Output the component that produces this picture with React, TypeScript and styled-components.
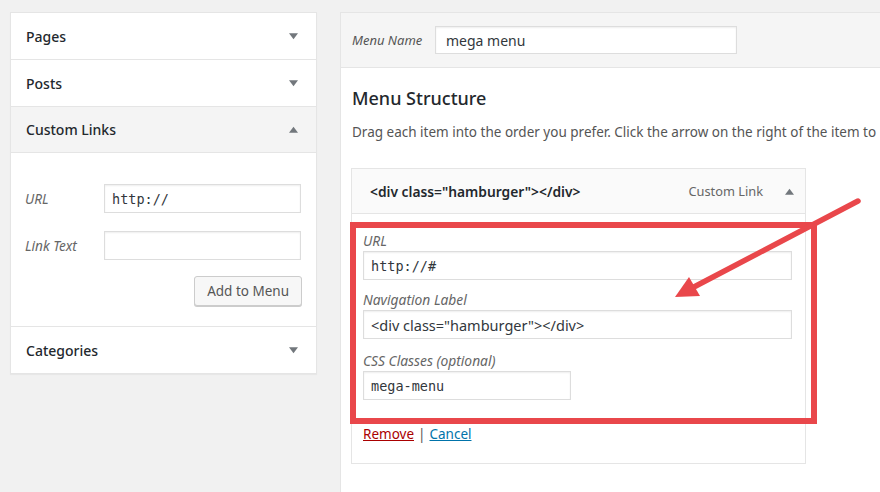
import React from "react";
import styled, { createGlobalStyle } from "styled-components";

const GlobalStyle = createGlobalStyle`
  html, body {
    margin: 0;
    padding: 0;
    background: #f1f1f1;
    overflow: hidden;
  }
  body {
    font-family: "Noto Sans", "Open Sans", sans-serif;
    color: #23282d;
  }
  * {
    box-sizing: border-box;
  }
`;

type Section = { title: string; open?: boolean };

const Caret = ({ up }: { up?: boolean }) => (
  <CaretSvg viewBox="0 0 10 7" $up={up}>
    <path d="M0 0 L10 0 L5 6.5 Z" fill="#72777c" />
  </CaretSvg>
);

const App: React.FC = () => {
  const sections: Section[] = [
    { title: "Pages" },
    { title: "Posts" },
    { title: "Custom Links", open: true },
    { title: "Categories" },
  ];

  return (
    <Page>
      <GlobalStyle />
      <Sidebar>
        {sections.map((s) => (
          <Accordion key={s.title}>
            <AccordionTitle $open={s.open}>
              <span>{s.title}</span>
              <Caret up={s.open} />
            </AccordionTitle>
            {s.open && (
              <AccordionBody>
                <LinkRow>
                  <SideLabel>URL</SideLabel>
                  <SideInput $mono>http://</SideInput>
                </LinkRow>
                <LinkRow>
                  <SideLabel>Link Text</SideLabel>
                  <SideInput />
                </LinkRow>
                <ButtonRow>
                  <Button>Add to Menu</Button>
                </ButtonRow>
              </AccordionBody>
            )}
          </Accordion>
        ))}
      </Sidebar>

      <Editor>
        <EditorHeader>
          <NameLabel>Menu Name</NameLabel>
          <NameInput>mega menu</NameInput>
        </EditorHeader>
        <EditorBody>
          <Heading>Menu Structure</Heading>
          <Description>
            Drag each item into the order you prefer. Click the arrow on the right of the item to
          </Description>
          <MenuItem>
            <ItemHeader>
              <ItemTitle>&lt;div class="hamburger"&gt;&lt;/div&gt;</ItemTitle>
              <ItemControls>
                <ItemType>Custom Link</ItemType>
                <Caret up />
              </ItemControls>
            </ItemHeader>
            <ItemSettings>
              <Field>
                <FieldLabel>URL</FieldLabel>
                <FieldInput $mono>http://#</FieldInput>
              </Field>
              <Field>
                <FieldLabel>Navigation Label</FieldLabel>
                <FieldInput>&lt;div class="hamburger"&gt;&lt;/div&gt;</FieldInput>
              </Field>
              <Field>
                <FieldLabel>CSS Classes (optional)</FieldLabel>
                <FieldInput $mono $width={208}>
                  mega-menu
                </FieldInput>
              </Field>
              <Actions>
                <ActionLink $color="#a00">Remove</ActionLink>
                <Sep>|</Sep>
                <ActionLink $color="#0073aa">Cancel</ActionLink>
              </Actions>
            </ItemSettings>
            <Highlight />
          </MenuItem>
        </EditorBody>
      </Editor>

      <Annotation viewBox="0 0 880 492">
        <line
          x1="858"
          y1="201"
          x2="692"
          y2="288"
          stroke="#e9474b"
          strokeWidth="5.5"
          strokeLinecap="round"
        />
        <path d="M675 297 L689 277 L700 296 Z" fill="#e9474b" />
      </Annotation>
    </Page>
  );
};

const Page = styled.div`
  position: relative;
  width: 880px;
  height: 492px;
  display: flex;
  align-items: flex-start;
  gap: 23px;
  padding: 12px 0 0 10px;
  overflow: hidden;
`;

const CaretSvg = styled.svg<{ $up?: boolean }>`
  width: 9px;
  height: 7px;
  transform: ${(p) => (p.$up ? "rotate(180deg)" : "none")};
`;

const Sidebar = styled.div`
  width: 307px;
  flex-shrink: 0;
  background: #fff;
  border: 1px solid #e5e5e5;
  box-shadow: 0 1px 1px rgba(0, 0, 0, 0.04);
`;

const Accordion = styled.div`
  border-bottom: 1px solid #e5e5e5;
  &:last-child {
    border-bottom: none;
  }
`;

const AccordionTitle = styled.div<{ $open?: boolean }>`
  height: 46px;
  display: flex;
  align-items: center;
  justify-content: space-between;
  padding: 0 18px 0 15px;
  font-size: 14px;
  font-weight: 500;
  color: #23282d;
  background: ${(p) => (p.$open ? "#f4f4f4" : "#fff")};
  border-bottom: ${(p) => (p.$open ? "1px solid #e5e5e5" : "none")};
`;

const AccordionBody = styled.div`
  padding: 31px 15px 20px 14px;
`;

const LinkRow = styled.div`
  display: flex;
  align-items: center;
  margin-bottom: 18px;
  & + & {
    margin-bottom: 16px;
  }
`;

const SideLabel = styled.span`
  width: 79px;
  font-size: 13.6px;
  font-style: italic;
  color: #666;
`;

const SideInput = styled.div<{ $mono?: boolean }>`
  flex: 1;
  height: 29px;
  display: flex;
  align-items: center;
  padding: 0 7px;
  background: #fff;
  border: 1px solid #ddd;
  box-shadow: inset 0 1px 2px rgba(0, 0, 0, 0.07);
  font-family: ${(p) => (p.$mono ? '"DejaVu Sans Mono", monospace' : "inherit")};
  font-size: ${(p) => (p.$mono ? "13.5px" : "14px")};
  color: #32373c;
`;

const ButtonRow = styled.div`
  display: flex;
  justify-content: flex-end;
  margin-right: -1px;
`;

const Button = styled.div`
  height: 30px;
  padding: 0 12px;
  display: flex;
  align-items: center;
  background: #f7f7f7;
  border: 1px solid #ccc;
  border-radius: 3px;
  box-shadow: 0 1px 0 #ccc;
  font-size: 13.5px;
  color: #555;
`;

const Editor = styled.div`
  flex: 1;
  min-width: 600px;
  height: 520px;
  background: #fff;
  border: 1px solid #e5e5e5;
  border-right: none;
`;

const EditorHeader = styled.div`
  height: 55px;
  display: flex;
  align-items: center;
  padding: 0 11px;
  background: #f5f5f5;
  border-bottom: 1px solid #e5e5e5;
`;

const NameLabel = styled.span`
  font-size: 13px;
  font-style: italic;
  color: #555;
  width: 83px;
`;

const NameInput = styled.div`
  width: 302px;
  height: 28px;
  display: flex;
  align-items: center;
  padding: 0 10px;
  background: #fff;
  border: 1px solid #ddd;
  box-shadow: inset 0 1px 2px rgba(0, 0, 0, 0.07);
  font-size: 14px;
  color: #32373c;
`;

const EditorBody = styled.div`
  padding: 0 10px 0 10px;
`;

const Heading = styled.h3`
  margin: 18px 0 0 1px;
  font-size: 18px;
  font-weight: 500;
  line-height: 24px;
  color: #23282d;
`;

const Description = styled.p`
  margin: 12px 0 0 1px;
  font-size: 13.5px;
  line-height: 20px;
  color: #555;
  white-space: nowrap;
`;

const MenuItem = styled.div`
  position: relative;
  width: 455px;
  margin-top: 26px;
  border: 1px solid #e5e5e5;
  background: #fff;
`;

const ItemHeader = styled.div`
  height: 45px;
  display: flex;
  align-items: center;
  justify-content: space-between;
  padding: 0 11px 0 18px;
  background: #fafafa;
  border-bottom: 1px solid #e5e5e5;
`;

const ItemTitle = styled.span`
  font-size: 13.8px;
  font-weight: 600;
  color: #23282d;
`;

const ItemControls = styled.div`
  display: flex;
  align-items: center;
  gap: 22px;
`;

const ItemType = styled.span`
  font-size: 12.8px;
  color: #666;
`;

const ItemSettings = styled.div`
  padding: 18px 13px 20px 11px;
`;

const Field = styled.div`
  margin-bottom: 11px;
  &:nth-child(2) {
    margin-bottom: 13px;
  }
`;

const FieldLabel = styled.div`
  font-size: 13.8px;
  line-height: 18px;
  font-style: italic;
  color: #666;
  margin-bottom: 1px;
`;

const FieldInput = styled.div<{ $mono?: boolean; $width?: number }>`
  width: ${(p) => (p.$width ? `${p.$width}px` : "100%")};
  height: 29px;
  display: flex;
  align-items: center;
  padding: 0 7px;
  background: #fff;
  border: 1px solid #ddd;
  box-shadow: inset 0 1px 2px rgba(0, 0, 0, 0.07);
  font-family: ${(p) => (p.$mono ? '"DejaVu Sans Mono", monospace' : "inherit")};
  font-size: ${(p) => (p.$mono ? "13.5px" : "14.5px")};
  color: #32373c;
`;

const Actions = styled.div`
  margin-top: 25px;
  font-size: 13.5px;
  line-height: 18px;
  display: flex;
  gap: 4px;
`;

const ActionLink = styled.span<{ $color: string }>`
  color: ${(p) => p.$color};
  text-decoration: underline;
`;

const Sep = styled.span`
  color: #555;
`;

const Highlight = styled.div`
  position: absolute;
  left: -2px;
  top: 53px;
  width: 467px;
  height: 202px;
  border: 6px solid #e9474b;
  pointer-events: none;
`;

const Annotation = styled.svg`
  position: absolute;
  left: 0;
  top: 0;
  width: 880px;
  height: 492px;
  pointer-events: none;
`;

export default App;
